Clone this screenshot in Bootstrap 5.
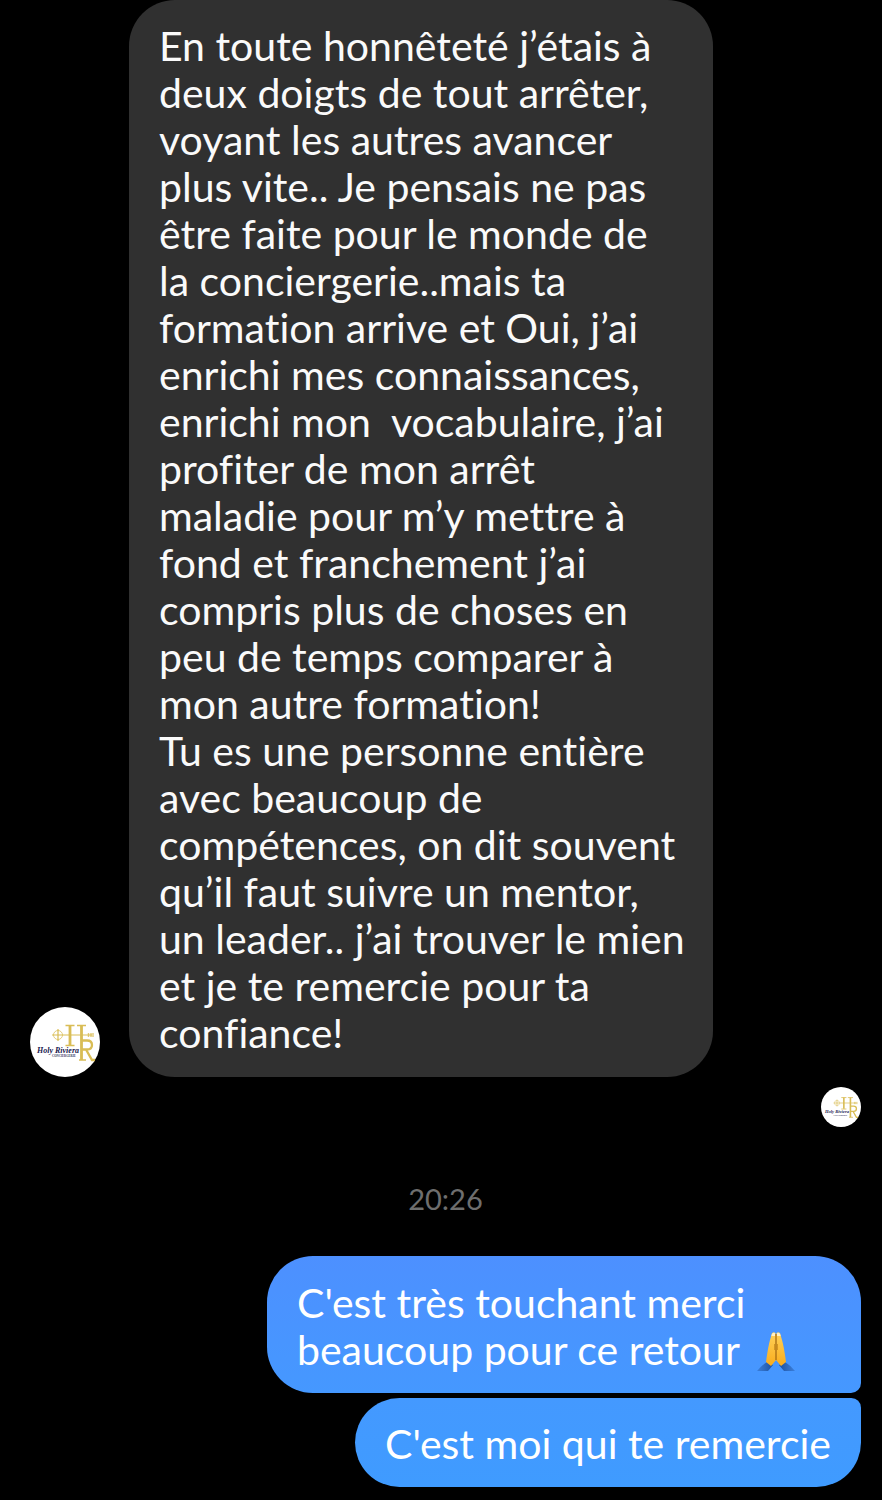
<!DOCTYPE html>
<html lang="fr" data-bs-theme="dark">
<head>
<meta charset="utf-8">
<meta name="viewport" content="width=device-width, initial-scale=1">
<title>Discussion</title>
<link href="https://cdn.jsdelivr.net/npm/bootstrap@5.3.0/dist/css/bootstrap.min.css" rel="stylesheet">
<style>
  body { background: #000; font-family: Lato, sans-serif; font-variant-ligatures: none; }
  .thread { padding: 0 21px 13px 30px; }
  .incoming { gap: 29px; }
  .bubble { font-size: 41px; line-height: 47px; border-radius: 46px; padding: 22px 30px 20px; margin: 0; color: #fff; }
  .bubble-in { background: #303030; color: #fafafa; width: 584px; padding: 22px 20px 21px 30px; }
  .bubble-first { background: linear-gradient(#4d90ff, #4598ff); border-bottom-right-radius: 10px; width: 594px; max-width: 100%; padding: 23px 20px 20px 30px; }
  .bubble-last { background: linear-gradient(#4499ff, #3f9bff); border-top-right-radius: 10px; }
  .outgoing { gap: 5px; }
  .avatar { width: 70px; height: 70px; }
  .seen { width: 40px; height: 40px; margin-top: 10px; }
  .stamp { font-size: 29px; line-height: 36px; color: #6e6e6e; margin: 54px 0 39px; }
  .emoji { width: 40px; height: 40px; vertical-align: -7px; margin-left: 8px; }
</style>
</head>
<body>
<main class="thread container-fluid d-flex flex-column">
  <div class="incoming d-flex align-items-end">
    <svg class="avatar flex-shrink-0" viewBox="0 0 70 70" role="img" aria-label="Holy Riviera">
      <g id="logo">
        <circle cx="35" cy="35" r="35" fill="#fff"/>
        <g fill="none" stroke="#d9bd55">
          <circle cx="28" cy="28" r="4.500" stroke-width="1" opacity=".75"/>
          <path d="M22 28H62M28 22V34" stroke-width="1.200"/>
          <path d="M40 18.500V38M51.500 18.500V53" stroke-width="2.800"/>
          <path d="M35.500 18.500H44.500M35.500 38.500H44.500M47 18.500H56M49 53H56" stroke-width="1.400"/>
          <path d="M52 33.500H57Q62 33.500 62 38Q62 42.500 57 42.500H52M56 42.500L62 53H65" stroke-width="2.300"/>
          <path d="M58.500 26V30M61 26V30M63 26V30" stroke-width="1.400" opacity=".8"/>
        </g>
        <text x="7" y="46" font-family="Liberation Serif, serif" font-style="italic" font-weight="700" font-size="8" fill="#20204f">Holy Riviera</text>
        <text x="22" y="50" font-family="Liberation Serif, serif" font-weight="700" font-size="3" fill="#34345e">CONCIERGERIE</text>
      </g>
    </svg>
    <p class="bubble bubble-in">En toute honnêteté j’étais à<br>deux doigts de tout arrêter,<br>voyant les autres avancer<br>plus vite.. Je pensais ne pas<br>être faite pour le monde de<br>la conciergerie..mais ta<br>formation arrive et Oui, j’ai<br>enrichi mes connaissances,<br>enrichi mon&nbsp; vocabulaire, j’ai<br>profiter de mon arrêt<br>maladie pour m’y mettre à<br>fond et franchement j’ai<br>compris plus de choses en<br>peu de temps comparer à<br>mon autre formation!<br>Tu es une personne entière<br>avec beaucoup de<br>compétences, on dit souvent<br>qu’il faut suivre un mentor,<br>un leader.. j’ai trouver le mien<br>et je te remercie pour ta<br>confiance!</p>
  </div>
  <svg class="seen align-self-end" viewBox="0 0 70 70" role="img" aria-label="Vu par Holy Riviera"><use href="#logo"/></svg>

  <time class="stamp text-center" datetime="20:26">20:26</time>

  <div class="outgoing d-flex flex-column align-items-end">
    <p class="bubble bubble-first">C'est très touchant merci<br>beaucoup pour ce retour
      <svg class="emoji" viewBox="0 0 40 40" role="img" aria-label="Mains jointes">
        <defs>
          <linearGradient id="skin" x1="0" y1="0" x2="0" y2="1"><stop offset="0" stop-color="#ffd15a"/><stop offset="1" stop-color="#f9ac1c"/></linearGradient>
          <linearGradient id="cuffL"><stop offset="0" stop-color="#2b64b5" stop-opacity=".5"/><stop offset="1" stop-color="#1d4f9c"/></linearGradient>
          <linearGradient id="cuffR"><stop offset="0" stop-color="#1d4f9c"/><stop offset="1" stop-color="#2b64b5" stop-opacity=".5"/></linearGradient>
        </defs>
        <path d="M0 39Q5 33 10 30L16 33L11 39Z" fill="url(#cuffL)"/>
        <path d="M38 39Q33 33 28 30L22 33L27 39Z" fill="url(#cuffR)"/>
        <path d="M15 1Q18.500-1 19 3V28L14 34L9 30Q11 15 13 8Z" fill="url(#skin)"/>
        <path d="M23 1Q19.500-1 19 3V28L24 34L29 30Q27 15 25 8Z" fill="url(#skin)"/>
        <path d="M19 2V28" stroke="#a56a13" stroke-width="1.300"/>
        <path d="M17.500 12V18M20.500 12V18" stroke="#c98a1c" stroke-width=".8"/>
        <path d="M14.500 3Q15.500 0 18 1V4H14.500ZM20 1Q22.500 0 23.500 3V4H20Z" fill="#fff0c8"/>
      </svg></p>
    <p class="bubble bubble-last">C'est moi qui te remercie</p>
  </div>
</main>
<script src="https://cdn.jsdelivr.net/npm/bootstrap@5.3.0/dist/js/bootstrap.bundle.min.js"></script>
</body>
</html>
